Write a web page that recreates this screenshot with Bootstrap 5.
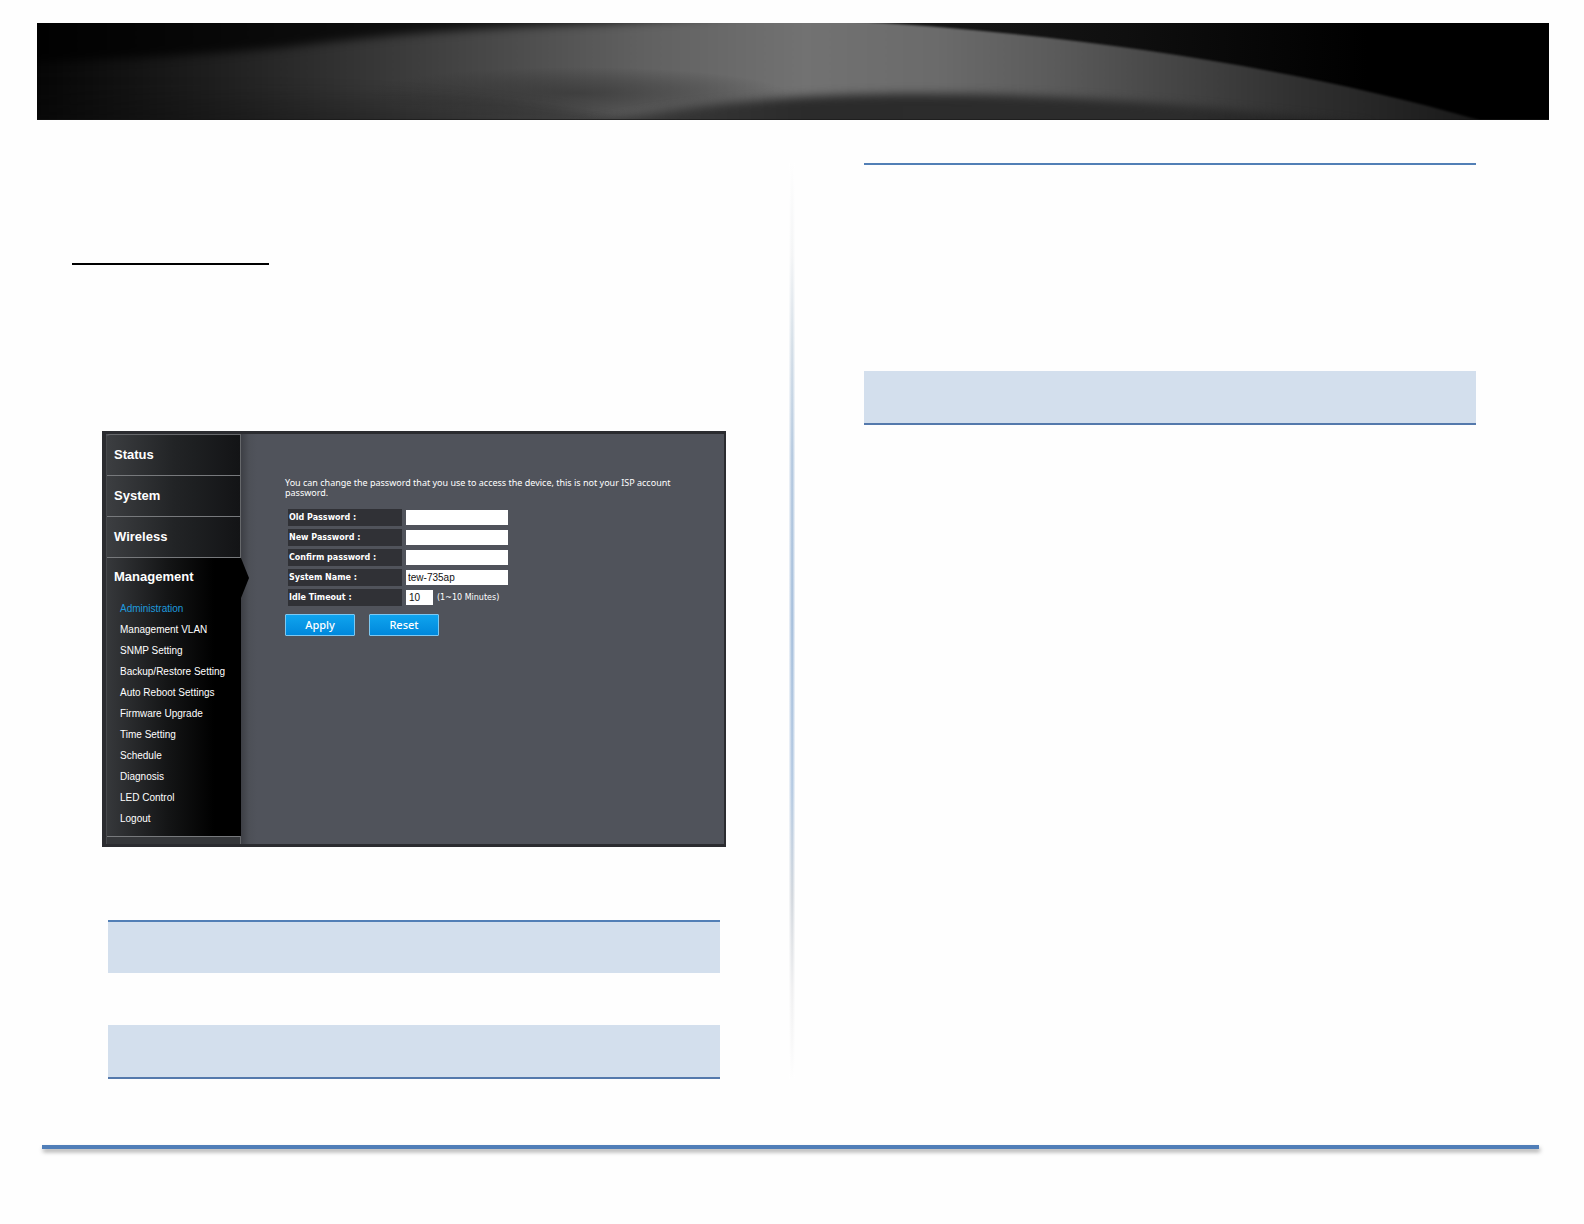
<!DOCTYPE html>
<html lang="en">
<head>
<meta charset="utf-8">
<meta name="viewport" content="width=device-width, initial-scale=1">
<title>Administration</title>
<link rel="stylesheet" href="https://cdn.jsdelivr.net/npm/bootstrap@5.3.0/dist/css/bootstrap.min.css">
<style>
  body { background: #fefefe; font-family: "Liberation Sans", Arial, sans-serif; padding-top: 23px; padding-bottom: 75px; }
  .banner { margin: 0 35px 0 37px; height: 97px; background: #000; }
  .banner svg { width: 100%; height: 100%; }
  .banner filter { color-interpolation-filters: sRGB; }
  .sheet { padding: 43px 72px 0; gap: 69px; }
  .half { flex: 1 1 0; min-width: 0; }
  .divider { width: 6px; background: linear-gradient(to right, rgba(255,255,255,.85), rgba(255,255,255,0) 45%, rgba(255,255,255,0) 60%, rgba(255,255,255,.85)), linear-gradient(#fefefe, #f4f5f6 10%, #d5dfe8 20%, #b6cae0 32%, #a9c1dd 50%, #b6cbe3 68%, #d3d8de 80%, #f0f0f1 90%, #fefefe); }
  .title-rule { width: 197px; height: 2px; background: #000; margin-top: 100px; }
  .device { margin: 166px -6px 73px 30px; min-height: 416px; background: #505259; border: solid #2b2c30; border-width: 3px 2px 3px 4px; color: #fff; }
  .side { width: 135px; background: linear-gradient(to right, #3c3e41, #222426 50%, #131416); border: 1px solid #66686b; border-left-color: #46484b; border-bottom: 0; border-top-left-radius: 4px; }
  .side-link { display: block; height: 41px; line-height: 40px; padding-left: 7px; font-size: 13px; font-weight: bold; color: #fff; text-decoration: none; border-bottom: 1px solid #77797c; }
  .side-open { position: relative; flex: 1; margin-right: -1px; background: linear-gradient(to right, #36383b, #141516 45%, #000 80%); }
  .side-open::after { content: ""; position: absolute; left: 100%; top: 0; width: 8px; height: 40px; background: #000; clip-path: polygon(0 0, 100% 50%, 0 100%); }
  .side-open .side-link { border: 0; height: 40px; line-height: 38px; }
  .sub-link { display: block; height: 21px; line-height: 21px; padding-left: 13px; font-size: 10px; color: #fff; text-decoration: none; }
  .sub-link.current { color: #1e9ade; }
  .side-end { height: 8px; background: #35373a; border-top: 1px solid #77797c; }
  .panel-body { background: linear-gradient(to right, #3d3f45, #4d5057 8px, #50535b 16px); padding: 44px 45px 0 44px; font-family: "Noto Sans", Tahoma, sans-serif; font-size: 9px; line-height: 10px; }
  .fields { margin: 11px 0 0 3px; gap: 3px; }
  .field-name { width: 114px; height: 17px; line-height: 17px; padding-left: 1px; background: #303136; font-family: "DejaVu Sans", Verdana, sans-serif; font-size: 8px; font-weight: bold; }
  .field-box { width: 102px; height: 15px; margin-left: 4px; padding: 0 2px; border: 0; border-radius: 0; background: #fff; color: #111; font: 10px "Liberation Sans", Arial, sans-serif; }
  .field-box.short { width: 27px; padding-left: 3px; }
  .hint { font-family: "DejaVu Sans", Verdana, sans-serif; font-size: 8px; margin-left: 4px; }
  .acts { gap: 14px; }
  .act { width: 70px; height: 22px; padding: 0; border: 1px solid #7cc8f2; border-radius: 1px; background: linear-gradient(#0fa4ee, #0088dc); color: #fff; font: 500 11px/20px "Noto Sans", Tahoma, sans-serif; }
  .bands-left { margin-left: 36px; }
  .bands-right { margin-right: 36px; }
  .band { height: 52px; background: #d3dfed; }
  .band-clear { height: 52px; }
  .band-text { height: 208px; }
  .rule-top { border-top: 2px solid #527fb6; }
  .band.rule-top { height: 53px; }
  .band.rule-bottom { height: 54px; border-bottom: 2px solid #5479ac; }
  .foot { height: 4px; margin: 66px 45px 0 42px; background: #507eb8; box-shadow: 1px 3px 4px rgba(0,0,0,.35); }
</style>
<script defer src="https://cdn.jsdelivr.net/npm/bootstrap@5.3.0/dist/js/bootstrap.bundle.min.js"></script>
</head>
<body>
<header class="banner">
  <svg class="d-block" viewBox="0 0 1512 97" preserveAspectRatio="none" aria-hidden="true">
    <defs>
      <linearGradient id="night" x1="0" x2="1"><stop offset=".5" stop-color="#1d1d1d"/><stop offset=".72" stop-color="#0f0f0f"/><stop offset=".88" stop-color="#000"/></linearGradient>
      <linearGradient id="glow" gradientUnits="userSpaceOnUse" x1="0" x2="1450" y1="0" y2="0">
        <stop offset="0" stop-color="#060606"/><stop offset=".12" stop-color="#1e1e1e"/><stop offset=".22" stop-color="#343434"/><stop offset=".32" stop-color="#4a4a4a"/><stop offset=".42" stop-color="#616161"/><stop offset=".53" stop-color="#727272"/><stop offset=".62" stop-color="#6b6b6b"/><stop offset=".7" stop-color="#5b5b5b"/><stop offset=".78" stop-color="#464646"/><stop offset=".87" stop-color="#303030"/><stop offset="1" stop-color="#181818"/>
      </linearGradient>
      <linearGradient id="floor" gradientUnits="userSpaceOnUse" x1="560" x2="1400" y1="0" y2="0"><stop offset="0" stop-color="#3c3c3c"/><stop offset=".25" stop-color="#2b2b2b"/><stop offset=".7" stop-color="#2c2c2c"/><stop offset="1" stop-color="#1c1c1c"/></linearGradient>
      <radialGradient id="dip"><stop offset="0" stop-color="#282828" stop-opacity=".5"/><stop offset=".5" stop-color="#282828" stop-opacity=".28"/><stop offset="1" stop-color="#282828" stop-opacity="0"/></radialGradient>
      <linearGradient id="shade" x1="0" x2="0" y1="0" y2="1"><stop offset="0" stop-color="#0c0c0c" stop-opacity="0"/><stop offset="1" stop-color="#0c0c0c" stop-opacity=".6"/></linearGradient>
      <filter id="b1" filterUnits="userSpaceOnUse" x="-100" y="-60" width="1700" height="240"><feGaussianBlur stdDeviation="1"/></filter>
      <filter id="b5" filterUnits="userSpaceOnUse" x="-100" y="-60" width="1700" height="240"><feGaussianBlur stdDeviation="5"/></filter>
    </defs>
    <rect width="1512" height="97" fill="url(#night)"/>
    <path d="M-40 -20H600L740 -6C980 4 1230 36 1442 97V130H-40Z" fill="url(#glow)" filter="url(#b1)"/>
    <path d="M-60 -40H820C760 -6 640 -3 520 2C400 7 320 15 250 24C150 34 70 36 -60 42Z" fill="#000" fill-opacity=".75" filter="url(#b5)"/>
    <ellipse cx="540" cy="70" rx="210" ry="26" fill="url(#dip)"/>
    <path d="M-60 60C250 56 440 64 600 100V130H-60Z" fill="url(#shade)" filter="url(#b5)"/>
    <path d="M540 104C720 62 980 58 1330 102V150H540Z" fill="url(#floor)" filter="url(#b5)"/>
    <path d="M0 96.500H1512" stroke="#151515" stroke-opacity=".6"/>
  </svg>
</header>

<main class="sheet d-flex align-items-stretch">
  <section class="half">
    <div class="title-rule"></div>
    <div class="device d-flex">
      <nav class="side d-flex flex-column flex-shrink-0">
        <a class="side-link" href="#">Status</a>
        <a class="side-link" href="#">System</a>
        <a class="side-link" href="#">Wireless</a>
        <div class="side-open">
          <a class="side-link" href="#">Management</a>
          <a class="sub-link current" href="#">Administration</a>
          <a class="sub-link" href="#">Management VLAN</a>
          <a class="sub-link" href="#">SNMP Setting</a>
          <a class="sub-link" href="#">Backup/Restore Setting</a>
          <a class="sub-link" href="#">Auto Reboot Settings</a>
          <a class="sub-link" href="#">Firmware Upgrade</a>
          <a class="sub-link" href="#">Time Setting</a>
          <a class="sub-link" href="#">Schedule</a>
          <a class="sub-link" href="#">Diagnosis</a>
          <a class="sub-link" href="#">LED Control</a>
          <a class="sub-link" href="#">Logout</a>
        </div>
        <div class="side-end"></div>
      </nav>
      <form class="panel-body flex-grow-1">
        <p class="m-0">You can change the password that you use to access the device, this is not your ISP account password.</p>
        <div class="fields d-flex flex-column">
          <div class="d-flex align-items-center"><label class="field-name" for="oldpw">Old Password :</label><input class="field-box" id="oldpw" type="password"></div>
          <div class="d-flex align-items-center"><label class="field-name" for="newpw">New Password :</label><input class="field-box" id="newpw" type="password"></div>
          <div class="d-flex align-items-center"><label class="field-name" for="confpw">Confirm password :</label><input class="field-box" id="confpw" type="password"></div>
          <div class="d-flex align-items-center"><label class="field-name" for="sysname">System Name :</label><input class="field-box" id="sysname" type="text" value="tew-735ap"></div>
          <div class="d-flex align-items-center"><label class="field-name" for="idle">Idle Timeout :</label><input class="field-box short" id="idle" type="text" value="10"><span class="hint">(1~10 Minutes)</span></div>
        </div>
        <div class="acts d-flex mt-2">
          <button class="act" type="submit">Apply</button>
          <button class="act" type="reset">Reset</button>
        </div>
      </form>
    </div>
    <div class="bands-left">
      <div class="band rule-top"></div>
      <div class="band-clear"></div>
      <div class="band rule-bottom"></div>
    </div>
  </section>
  <div class="divider"></div>
  <section class="half">
    <div class="bands-right">
      <div class="band-text rule-top"></div>
      <div class="band rule-bottom"></div>
    </div>
  </section>
</main>
<footer class="foot"></footer>
</body>
</html>
